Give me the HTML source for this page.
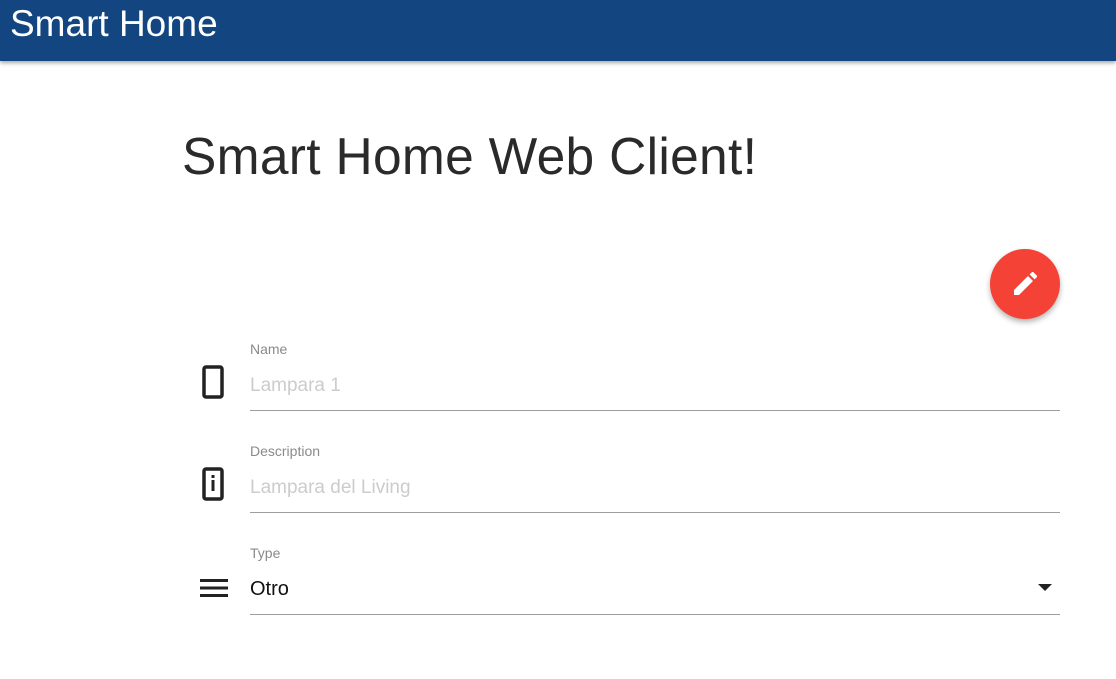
<!DOCTYPE html>
<html><head><style>
body{margin:0;width:1116px;height:679px;background:#fff;font-family:"Liberation Sans",sans-serif;overflow:hidden;position:relative}
.bar{position:absolute;left:0;top:0;width:1116px;height:61px;background:#134580;box-shadow:0 2px 4px rgba(0,0,0,.35)}
.bar span{position:absolute;left:10px;top:3px;font-size:37px;color:#fff}
h1{position:absolute;left:182px;top:126px;margin:0;font-weight:300;font-size:51.5px;color:#2a2a2a;letter-spacing:0.3px}
.fab{position:absolute;left:990px;top:249px;width:70px;height:70px;border-radius:50%;background:#f44336;box-shadow:0 3px 6px rgba(0,0,0,.3)}
.lbl{position:absolute;left:250px;font-size:14px;color:#8a8a8a}
.val{position:absolute;left:250px;font-size:19px;color:#ccc}
.line{position:absolute;left:250px;width:810px;height:1px;background:#9e9e9e}
</style></head><body>
<div class="bar"><span>Smart Home</span></div>
<h1>Smart Home Web Client!</h1>
<div class="fab"><svg width="70" height="70" viewBox="0 0 70 70"><path d="M24 41v5h5l14-14-5-5z M44.6 30.4l2-2a1.4 1.4 0 0 0 0-2l-3-3a1.4 1.4 0 0 0-2 0l-2 2z" fill="#fff"/></svg></div>

<svg style="position:absolute;left:202px;top:365px" width="24" height="36"><rect x="2" y="2" width="18" height="30" rx="2" fill="none" stroke="#222" stroke-width="3.5"/></svg>
<div class="lbl" style="top:341px">Name</div>
<div class="val" style="top:375px">Lampara 1</div>
<div class="line" style="top:410px"></div>

<svg style="position:absolute;left:202px;top:467px" width="24" height="36"><rect x="2" y="2" width="18" height="30" rx="2" fill="none" stroke="#222" stroke-width="3.5"/><rect x="9.5" y="8" width="3" height="3" fill="#222"/><rect x="9.5" y="13" width="3" height="11" fill="#222"/></svg>
<div class="lbl" style="top:443px">Description</div>
<div class="val" style="top:477px">Lampara del Living</div>
<div class="line" style="top:512px"></div>

<svg style="position:absolute;left:200px;top:579px" width="28" height="20"><rect x="0" y="0" width="28" height="3" fill="#222"/><rect x="0" y="7.5" width="28" height="3" fill="#222"/><rect x="0" y="15" width="28" height="3" fill="#222"/></svg>
<div class="lbl" style="top:545px">Type</div>
<div class="val" style="top:578px;color:#111;font-size:20px">Otro</div>
<svg style="position:absolute;left:1038px;top:584px" width="14" height="8"><path d="M0 0h14L7 7z" fill="#222"/></svg>
<div class="line" style="top:614px"></div>
</body></html>
